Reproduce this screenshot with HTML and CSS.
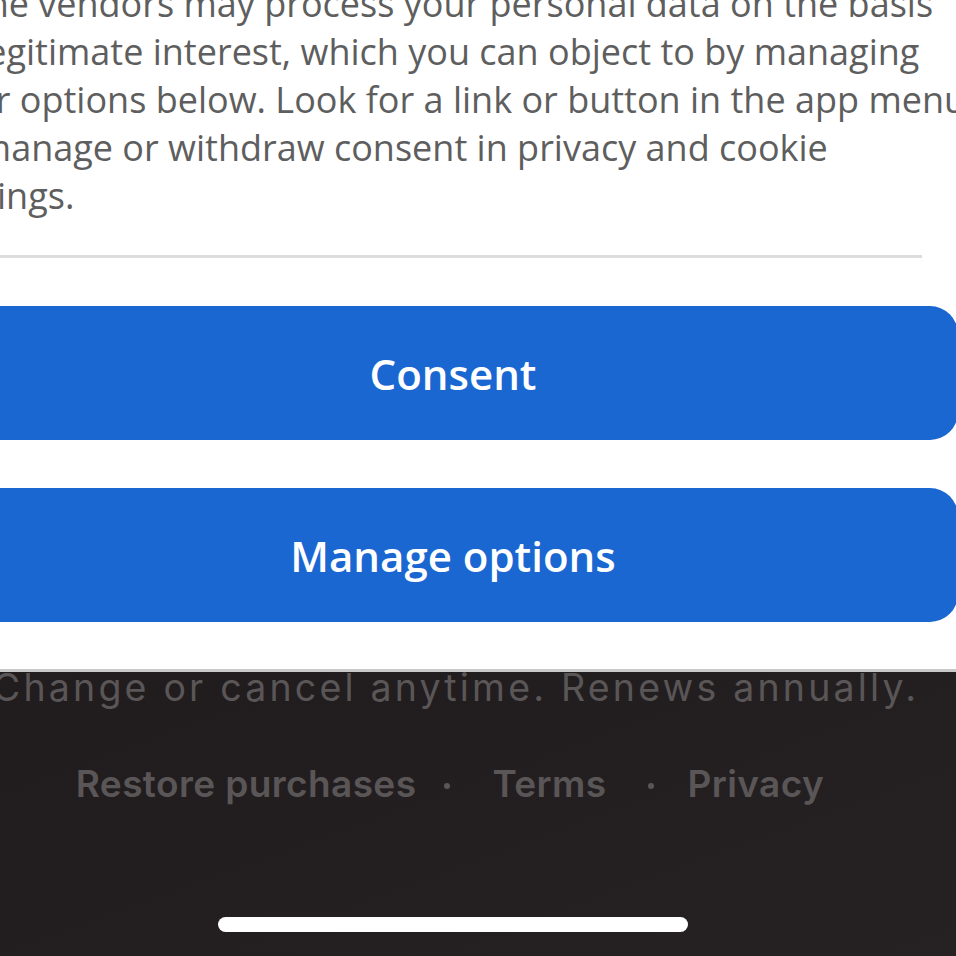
FILE: index.html
```html
<!DOCTYPE html>
<html lang="en">
<head>
<meta charset="utf-8">
<title>Consent</title>
<link rel="stylesheet" href="styles.css">
</head>
<body>
<div class="screen">
  <section class="sheet">
    <p class="notice">Some vendors may process your personal data on the basis<br>of legitimate interest, which you can object to by managing<br>your options below. Look for a link or button in the app menu<br>to manage or withdraw consent in privacy and cookie<br>settings.</p>
    <hr class="divider">
    <div class="actions">
      <button class="btn">Consent</button>
      <button class="btn">Manage options</button>
    </div>
  </section>
  <footer class="paywall">
    <p class="renew">Change or cancel anytime. Renews annually.</p>
    <nav class="links">
      <span class="link">Restore purchases</span>
      <span class="dot dot-first"></span>
      <span class="link">Terms</span>
      <span class="dot dot-second"></span>
      <span class="link">Privacy</span>
    </nav>
    <div class="home-bar"></div>
  </footer>
</div>
</body>
</html>
```
FILE: styles.css
```css
* { box-sizing: border-box; }
html, body {
  margin: 0;
  padding: 0;
  width: 956px;
  height: 956px;
  overflow: hidden;
  background: #221e1f;
}
.screen {
  width: 1038px;
  height: 956px;
  margin-left: -66px;
  display: flex;
  flex-direction: column;
  background: linear-gradient(160deg, #231f20 0%, #211d1e 60%, #262223 100%);
}
.sheet {
  position: relative;
  z-index: 1;
  background: #ffffff;
  height: 672px;
  border-bottom: 3px solid #c9c9c9;
  display: flex;
  flex-direction: column;
  font-family: "Open Sans", "Liberation Sans", sans-serif;
}
.notice {
  margin: -20px 0 0 0;
  font-size: 36px;
  line-height: 48px;
  color: #5e5e5e;
  white-space: nowrap;
}
.divider {
  margin: 35px 50px 0 0;
  border: 0;
  height: 3px;
  background: #dcdcdc;
}
.actions {
  margin-top: 48px;
  padding: 0 14px;
  display: flex;
  flex-direction: column;
  gap: 48px;
}
.btn {
  height: 134px;
  border: 0;
  border-radius: 28px;
  background: #1a67d2;
  color: #ffffff;
  font-family: "Open Sans", "Liberation Sans", sans-serif;
  font-weight: 600;
  font-size: 42px;
  padding: 0;
}
.paywall {
  flex: 1;
  display: flex;
  flex-direction: column;
  align-items: center;
  font-family: "Inter", "Liberation Sans", sans-serif;
  color: #5a5657;
}
.renew {
  margin: -6px 0 0 6px;
  font-size: 37.5px;
  line-height: 44px;
  font-weight: 400;
  letter-spacing: 3.2px;
  white-space: nowrap;
}
.links {
  margin: 52px 6px 0 0;
  display: flex;
  align-items: center;
  font-size: 37px;
  line-height: 44px;
  font-weight: 600;
  letter-spacing: 0.4px;
}
.dot {
  width: 6px;
  height: 6px;
  border-radius: 50%;
  background: #5a5657;
  margin-top: 4px;
}
.dot-first { margin-left: 28px; margin-right: 42px; }
.dot-second { margin-left: 42px; margin-right: 33px; }
.home-bar {
  margin-top: auto;
  margin-bottom: 24px;
  width: 470px;
  height: 15px;
  border-radius: 8px;
  background: #ffffff;
}
```
